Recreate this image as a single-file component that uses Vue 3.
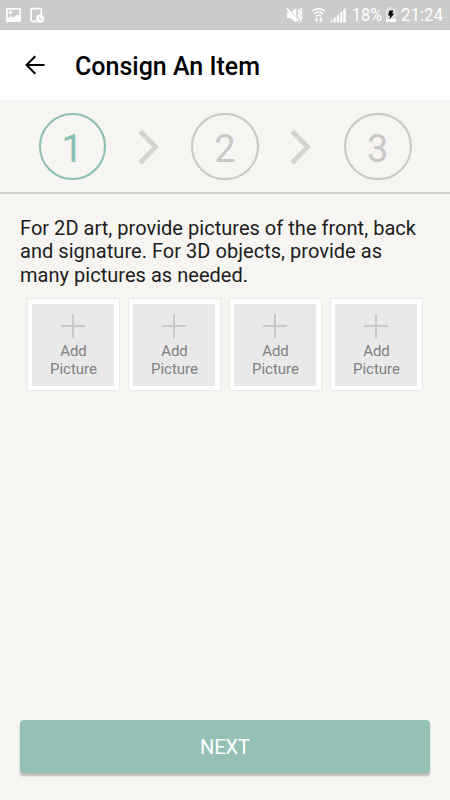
<script setup>
const steps = [1, 2, 3]
const current = 1
const slots = [1, 2, 3, 4]
</script>

<template>
  <div class="screen">
    <div class="status">
      <svg class="status-left" width="50" height="30" viewBox="0 0 50 30">
        <path fill="#fff" fill-rule="evenodd" d="M7 8h13q1 0 1 1v12q0 1-1 1H7q-1 0-1-1V9q0-1 1-1zM7.700 9.700v8.800l2.800-2.300 2.300 1.600 4.500-3.300 2 1.500V9.700z" />
        <circle cx="10.500" cy="12.500" r="1.800" fill="#fff" />
        <path d="M41.300 15V9.800q0-1.100-1.100-1.100h-8q-1.100 0-1.100 1.100v10.400q0 1.100 1.100 1.100h4.500" fill="none" stroke="#fff" stroke-width="1.700" />
        <circle cx="40" cy="18.800" r="4.200" fill="#fff" />
        <path d="M39.800 16.500v2.600h2.400M33.500 19.300h2" fill="none" stroke="#cbcbcb" stroke-width="1" />
      </svg>
      <svg class="signals" width="64" height="30" viewBox="285 0 64 30">
        <path d="M287 12.300h3.500l5.800-4.300v14.500l-5.800-4.500h-3.500z" fill="#fff" />
        <path d="M288 8l11 12.500" stroke="#cbcbcb" stroke-width="1" />
        <path d="M286.800 8.500l11.800 13" stroke="#fff" stroke-width="1.800" />
        <path d="M299.200 9.300l-.9 2 1.200 2-1.200 2 1.200 2-.8 1.700M301.500 8.300l-1 2.500 1.300 2.200-1.300 2.200 1.300 2.200-1.300 2.200.9 2.200" fill="none" stroke="#fff" stroke-width="1.500" />
        <path d="M312.200 11.300q6.300-5.400 12.600 0M314.200 13.800q4.300-3.600 8.600 0M316.100 16.200q2.400-2 4.800 0" fill="none" stroke="#fff" stroke-width="1.500" />
        <path d="M316.500 17.500l2 2h-1.200v2.500h-1.600v-2.500h-1.200zM320.800 22l-2-2h1.200v-2.500h1.600V20h1.200z" fill="#fff" />
        <path d="M330.500 21.200l2-1.800v3.100h-2zM333.700 18.500l2-1.800v5.800h-2zM336.900 15.700l2.100-1.800v8.600h-2.100zM340.100 12.800l2.200-1.900v11.600h-2.200zM343.300 10l2.500-2.200v14.700h-2.500z" fill="#fff" />
      </svg>
      <span class="percent">18%</span>
      <svg class="battery" width="12" height="16" viewBox="0 0 12 16">
        <path d="M4 0h4v1.800h3V15H1V1.800h3z" fill="#e0e0e0" />
        <path d="M1 12h10v3H1z" fill="#fff" />
        <path d="M4.500 3.500h4L7 6.500h2.200L4.400 12.500l.8-4H3z" fill="#000" />
      </svg>
      <span class="clock">21:24</span>
    </div>

    <header class="bar">
      <svg class="back" width="20" height="20" viewBox="0 0 20 20">
        <path d="M19.500 10H1.800M10.300 1.200L1.500 10l8.800 8.800" fill="none" stroke="#000" stroke-width="2" />
      </svg>
      <h1>Consign An Item</h1>
    </header>

    <nav class="steps">
      <template v-for="n in steps" :key="n">
        <svg v-if="n > 1" class="chevron" width="22" height="36" viewBox="0 0 22 36">
          <path d="M2.200 2.200L17.600 18l-15.400 15.800" fill="none" stroke="#d3d3d2" stroke-width="4.800" />
        </svg>
        <div class="step" :class="{ active: n === current }"><span>{{ n }}</span></div>
      </template>
    </nav>

    <main>
      <p class="intro">For 2D art, provide pictures of the front, back<br>and signature. For 3D objects, provide as<br>many pictures as needed.</p>
      <div class="slots">
        <button v-for="s in slots" :key="s" class="slot">
          <span class="tile">
            <svg width="24" height="24" viewBox="0 0 24 24">
              <path d="M12 0v24M0 12h24" stroke="#c9c9c9" stroke-width="2" />
            </svg>
            <span class="label">Add<br>Picture</span>
          </span>
        </button>
      </div>
    </main>

    <button class="next">NEXT</button>
  </div>
</template>

<style>
body {
  margin: 0;
  background: #f6f5f1;
}
</style>

<style scoped>
.screen {
  box-sizing: border-box;
  display: flex;
  flex-direction: column;
  width: 450px;
  height: 800px;
  overflow: hidden;
  padding-bottom: 27px;
  background: #f6f5f1;
  font-family: Roboto, sans-serif;
}
button {
  margin: 0;
  padding: 0;
  border: 0;
  font-family: inherit;
}
svg {
  display: block;
  flex: none;
}
.status {
  display: flex;
  flex: none;
  align-items: center;
  height: 30px;
  background: #cbcbcb;
  color: #fff;
  font-size: 19px;
  line-height: 32px;
  white-space: nowrap;
}
.signals {
  margin-left: 235px;
}
.percent {
  width: 31px;
  margin-left: 3px;
  transform: scaleX(0.85);
  transform-origin: left;
}
.battery {
  margin-left: 2px;
}
.clock {
  margin-left: 4px;
  transform: scaleX(0.89);
  transform-origin: left;
}
.bar {
  display: flex;
  flex: none;
  align-items: center;
  box-sizing: border-box;
  height: 70px;
  padding-left: 25px;
  background: #fff;
}
h1 {
  margin: 3px 0 0 30px;
  color: #000;
  font-size: 25px;
  font-weight: 500;
  line-height: 30px;
}
.steps {
  display: flex;
  flex: none;
  align-items: center;
  justify-content: space-between;
  box-sizing: border-box;
  height: 94px;
  padding: 0 38.500px;
  border-bottom: 2px solid #d3d3d1;
}
.step {
  display: flex;
  align-items: center;
  justify-content: center;
  box-sizing: border-box;
  width: 67.500px;
  height: 67.500px;
  margin-top: 1px;
  border: 2px solid #c8c8c8;
  border-radius: 50%;
  color: #c8c8c8;
  font-size: 38px;
  line-height: 40px;
}
.step span {
  margin-top: 4px;
}
.step.active {
  border-color: #8abfb1;
  color: #8abfb1;
}
.chevron {
  margin-top: 1px;
}
main {
  flex: 1;
}
.intro {
  margin: 23px 20px 0;
  color: #1d1d1d;
  font-size: 20px;
  letter-spacing: 0.03px;
  line-height: 23.400px;
  white-space: nowrap;
}
.slots {
  display: flex;
  gap: 10px;
  padding: 12px 0 0 27.500px;
}
.slot {
  box-sizing: border-box;
  width: 91px;
  height: 91px;
  padding: 4.500px;
  background: #fff;
  box-shadow: 0 0 2px rgba(0, 0, 0, 0.14);
}
.tile {
  display: flex;
  flex-direction: column;
  align-items: center;
  box-sizing: border-box;
  height: 82px;
  padding-top: 10px;
  background: #e9e9e9;
}
.label {
  margin-top: 4px;
  padding-left: 1px;
  color: #818181;
  font-size: 15px;
  line-height: 18px;
}
.next {
  flex: none;
  height: 53px;
  margin: 0 20px;
  border-radius: 4px;
  background: #95c0b5;
  box-shadow: 0 3px 2px -0.5px rgba(0, 0, 0, 0.24);
  color: #fff;
  font-size: 20px;
  line-height: 54px;
}
</style>
